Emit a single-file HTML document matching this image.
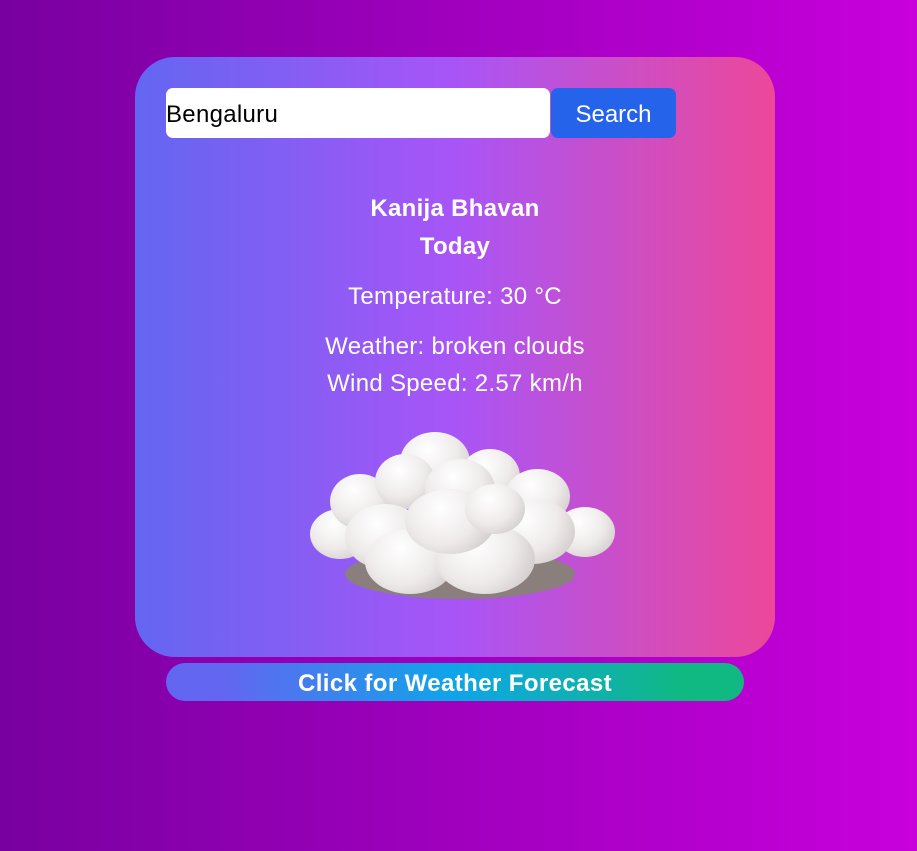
<!DOCTYPE html>
<html><head><style>
body{margin:0;width:917px;height:851px;background:linear-gradient(90deg,#7800a0,#c800dc);font-family:"Liberation Sans",sans-serif;position:relative;overflow:hidden}
.card{position:absolute;left:135px;top:57px;width:640px;height:600px;border-radius:40px;background:linear-gradient(90deg,#6366f1,#a855f7 50%,#ec4899)}
.inp{position:absolute;left:31px;top:31px;width:384px;height:50px;background:#fff;border-radius:7px;font-size:24px;letter-spacing:0.3px;line-height:54px;color:#000}
.btn{position:absolute;left:416px;top:31px;width:125px;height:50px;background:#2563eb;border-radius:7px;color:#fff;font-size:24px;line-height:54px;text-align:center}
.t{position:absolute;left:0;width:640px;text-align:center;color:#fff;font-size:24px;letter-spacing:0.3px}
.fc{position:absolute;left:166px;top:663px;width:578px;height:38px;border-radius:19px;background:linear-gradient(90deg,#6366f1 10%,#0ea5e9 50%,#10b981 90%);color:#fff;font-weight:bold;font-size:24px;letter-spacing:0.4px;line-height:41px;text-align:center}
.c{position:absolute;border-radius:50%;background:radial-gradient(circle at 40% 30%,#fff,#eeeaea 50%,#c4bebc)}
</style></head><body>
<div class="card">
<div class="inp">Bengaluru</div>
<div class="btn">Search</div>
<div class="t" style="top:138px;font-weight:bold">Kanija Bhavan</div>
<div class="t" style="top:176px;font-weight:bold">Today</div>
<div class="t" style="top:226px">Temperature: 30 °C</div>
<div class="t" style="top:276px">Weather: broken clouds</div>
<div class="t" style="top:313px">Wind Speed: 2.57 km/h</div>
<div style="position:absolute;left:170px;top:372px;width:310px;height:180px">
<div style="position:absolute;left:40px;top:120px;width:230px;height:50px;border-radius:50%;background:#8a7f7c"></div>
<div class="c" style="left:5px;top:80px;width:60px;height:50px"></div>
<div class="c" style="left:250px;top:78px;width:60px;height:50px"></div>
<div class="c" style="left:25px;top:45px;width:60px;height:55px"></div>
<div class="c" style="left:95px;top:3px;width:70px;height:60px"></div>
<div class="c" style="left:70px;top:25px;width:60px;height:55px"></div>
<div class="c" style="left:155px;top:20px;width:60px;height:55px"></div>
<div class="c" style="left:200px;top:40px;width:65px;height:55px"></div>
<div class="c" style="left:120px;top:30px;width:70px;height:60px"></div>
<div class="c" style="left:40px;top:75px;width:80px;height:65px"></div>
<div class="c" style="left:185px;top:70px;width:85px;height:65px"></div>
<div class="c" style="left:60px;top:100px;width:90px;height:65px"></div>
<div class="c" style="left:130px;top:95px;width:100px;height:70px"></div>
<div class="c" style="left:100px;top:60px;width:90px;height:65px"></div>
<div class="c" style="left:160px;top:55px;width:60px;height:50px"></div>
</div>
</div>
<div class="fc">Click for Weather Forecast</div>
</body></html>
